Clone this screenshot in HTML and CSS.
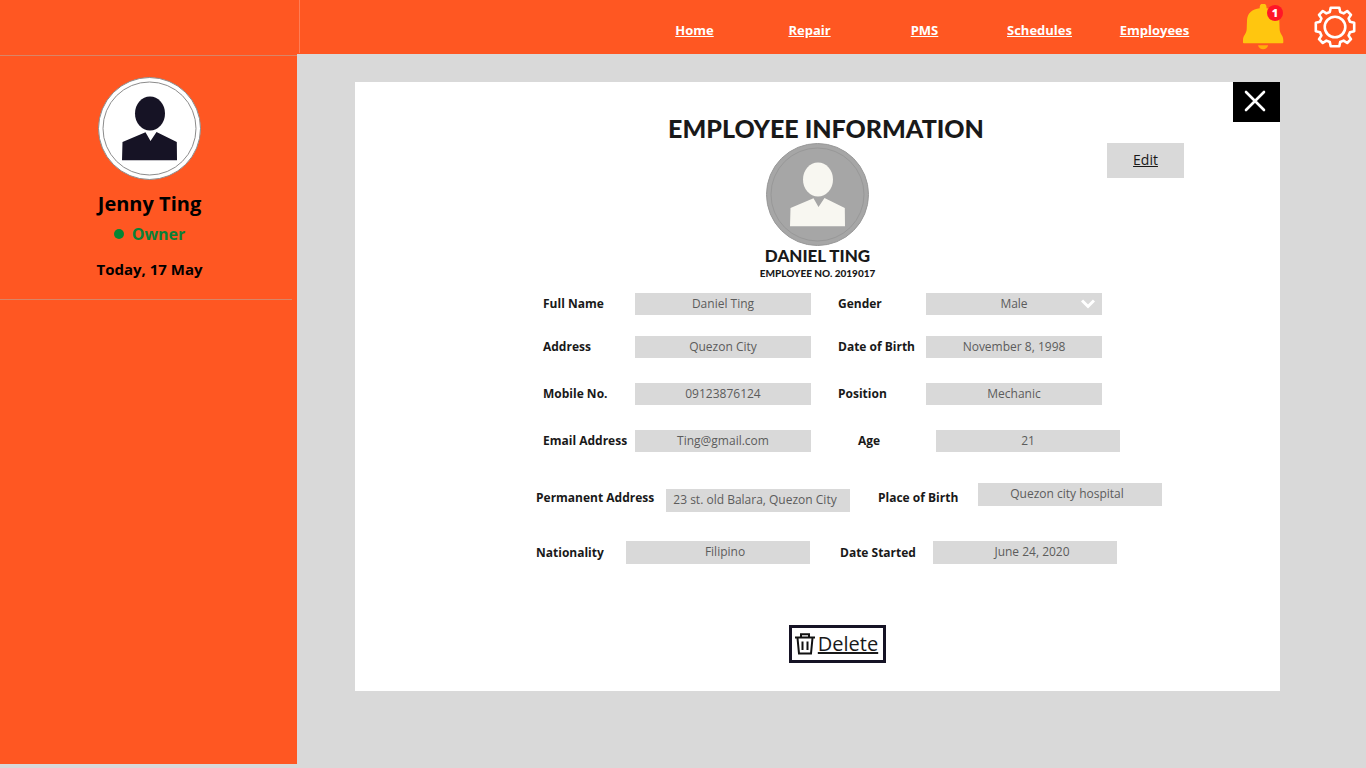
FILE: index.html
```html
<!DOCTYPE html>
<html lang="en">
<head>
<meta charset="utf-8">
<meta name="viewport" content="width=device-width, initial-scale=1">
<title>Employee Information</title>
<link rel="stylesheet" href="styles.css">
</head>
<body>
<svg class="sprite" aria-hidden="true">
  <symbol id="person" viewBox="0 0 103 103">
    <circle class="disc" cx="51.5" cy="51.5" r="51"/>
    <circle class="ring" cx="51.5" cy="51.5" r="46.5"/>
    <ellipse class="figure" cx="52" cy="36.500" rx="15" ry="17"/>
    <path class="figure" d="M24.500 65 47.500 55.200 52.500 64 58.500 55 78.800 65 79 83.200H24Z"/>
  </symbol>
</svg>

<header class="topbar">
  <div class="brand"></div>
  <nav class="nav" aria-label="Main">
    <a href="#">Home</a>
    <a href="#">Repair</a>
    <a href="#">PMS</a>
    <a href="#">Schedules</a>
    <a href="#">Employees</a>
  </nav>
  <button class="icon-button" type="button" aria-label="Notifications">
    <svg width="41" height="46" viewBox="0 0 41 46" fill="#ffc60f">
      <path d="M16.700 4.200V3a3.400 3.400 0 0 1 6.800 0v1.200C31 5 36 9 36.300 16.500L36.600 25C36.800 30 40.300 31.500 40.300 36V38.500Q40.300 39.300 39.500 39.300H.8Q0 39.300 0 38.500V36C0 31.500 3.500 30 3.700 25L4 16.500C4.300 9 9.200 5 16.700 4.200Z"/>
      <path fill="#ffad0a" d="M15 41.200H25.200C24.400 43.800 22.600 45.200 20.100 45.200S15.800 43.800 15 41.200Z"/>
    </svg>
    <span class="badge">1</span>
  </button>
  <button class="icon-button" type="button" aria-label="Settings">
    <svg width="42" height="42" viewBox="-21 -21 42 42" fill="none" stroke="#fff" stroke-width="2.600" stroke-linejoin="round">
      <path d="M-4.300-19.200H4.300L5.200-15 8.600-13.600 12.200-16 16-12.200 13.600-8.600 15-5.200 19.200-4.300V4.300L15 5.200 13.600 8.600 16 12.200 12.200 16 8.600 13.600 5.200 15 4.300 19.200H-4.300L-5.200 15-8.600 13.600-12.200 16-16 12.200-13.600 8.600-15 5.200-19.200 4.300V-4.300L-15-5.200-13.600-8.600-16-12.200-12.200-16-8.600-13.600-5.200-15Z"/>
      <circle r="10.300"/>
    </svg>
  </button>
</header>

<div class="layout">
  <aside class="sidebar">
    <div class="profile">
      <svg class="avatar avatar-owner" role="img" aria-label="Jenny Ting"><use href="#person"/></svg>
      <p class="profile-name">Jenny Ting</p>
      <p class="profile-role"><span class="dot"></span>Owner</p>
      <p class="profile-date">Today, 17 May</p>
    </div>
  </aside>

  <main class="content">
    <section class="card">
      <button class="close" type="button" aria-label="Close">
        <svg width="22" height="22" viewBox="0 0 22 22" stroke="#fff" stroke-width="2.600" stroke-linecap="round"><path d="M2 2 20 20M20 2 2 20"/></svg>
      </button>
      <h1 class="title">EMPLOYEE INFORMATION</h1>
      <div class="identity">
        <svg class="avatar avatar-employee" role="img" aria-label="Daniel Ting"><use href="#person"/></svg>
        <button class="edit" type="button">Edit</button>
      </div>
      <h2 class="employee-name">DANIEL TING</h2>
      <p class="employee-no">EMPLOYEE NO. 2019017</p>

      <form class="form">
        <div class="row">
          <label for="name">Full Name</label>
          <input id="name" type="text" value="Daniel Ting">
          <label for="gender">Gender</label>
          <div class="select">
            <select id="gender"><option>Male</option><option>Female</option></select>
            <svg class="chevron" width="14" height="10" viewBox="0 0 14 10" fill="none" stroke="#fff" stroke-width="3"><path d="M1 1.500 7 7.500 13 1.500"/></svg>
          </div>
        </div>
        <div class="row">
          <label for="address">Address</label>
          <input id="address" type="text" value="Quezon City">
          <label for="dob">Date of Birth</label>
          <input id="dob" type="text" value="November 8, 1998">
        </div>
        <div class="row">
          <label for="mobile">Mobile No.</label>
          <input id="mobile" type="text" value="09123876124">
          <label for="position">Position</label>
          <input id="position" type="text" value="Mechanic">
        </div>
        <div class="row row-age">
          <label for="email">Email Address</label>
          <input id="email" type="text" value="Ting@gmail.com">
          <label for="age">Age</label>
          <input id="age" type="text" value="21">
        </div>
        <div class="row row-places">
          <label for="permanent">Permanent Address</label>
          <input id="permanent" class="low" type="text" value="23 st. old Balara, Quezon City">
          <label for="birthplace">Place of Birth</label>
          <input id="birthplace" class="high" type="text" value="Quezon city hospital">
        </div>
        <div class="row row-status">
          <label for="nationality">Nationality</label>
          <input id="nationality" type="text" value="Filipino">
          <label for="started">Date Started</label>
          <input id="started" type="text" value="June 24, 2020">
        </div>
      </form>

      <button class="delete" type="button">
        <svg width="20" height="22" viewBox="0 0 20 22" fill="none" stroke="#111" stroke-width="2">
          <path d="M0 4.500H20M6 4.500V1.200H14V4.500M2.500 5 4 20.500H16L17.500 5M7.500 8.500V17M12.500 8.500V17"/>
        </svg>
        <span>Delete</span>
      </button>
    </section>
  </main>
</div>
</body>
</html>
```

FILE: styles.css
```css
* {
  box-sizing: border-box;
}

body {
  margin: 0;
  min-height: 100vh;
  display: flex;
  flex-direction: column;
  background: #d9d9d9;
  color: #191919;
  font-family: "Open Sans", "Noto Sans", sans-serif;
}

p,
h1,
h2 {
  margin: 0;
}

button {
  padding: 0;
  border: 0;
  font: inherit;
  color: inherit;
  cursor: pointer;
}

.sprite {
  display: none;
}

.topbar {
  display: flex;
  align-items: center;
  height: 54px;
  padding: 0 10px 1px 0;
  background: #ff5722;
}

.brand {
  align-self: stretch;
  width: 300px;
  margin-right: auto;
  border-right: 1px solid #ff7d55;
}

.nav {
  display: grid;
  grid-template-columns: repeat(5, 115px);
  margin-right: 31px;
  padding-top: 6px;
  font-size: 13px;
  font-weight: 700;
  text-align: center;
}

.nav a {
  color: #fff;
}

.icon-button {
  position: relative;
  background: none;
}

.icon-button svg {
  display: block;
}

.icon-button + .icon-button {
  margin-left: 30px;
}

.badge {
  position: absolute;
  top: 1px;
  right: 1px;
  width: 16px;
  height: 16px;
  border-radius: 50%;
  background: #ff1628;
  color: #fff;
  font-size: 11px;
  font-weight: 800;
  line-height: 16px;
}

.layout {
  flex: 1;
  display: flex;
}

.sidebar {
  flex-shrink: 0;
  width: 297px;
  margin-bottom: 4px;
  padding-top: 1px;
  background: #ff5722;
}

.sidebar::before {
  content: "";
  display: block;
  height: 1px;
  background: #d98567;
}

.profile {
  display: flex;
  flex-direction: column;
  align-items: center;
  margin-right: 5px;
  padding: 21px 0 19px 7px;
  border-bottom: 1px solid #d98567;
  color: #000;
  font-weight: 700;
}

.avatar {
  display: block;
  width: 103px;
  height: 103px;
}

.disc,
.ring {
  stroke: var(--line);
  stroke-width: 1;
}

.ring {
  fill: none;
}

.disc {
  fill: var(--disc);
}

.figure {
  fill: var(--figure);
}

.avatar-owner {
  --disc: #fff;
  --line: #8c8c8c;
  --figure: #161325;
}

.avatar-employee {
  --disc: #a6a6a6;
  --line: #989898;
  --figure: #f8f7f1;
  grid-column: 2;
}

.profile-name {
  padding-top: 10px;
  font-size: 20px;
  line-height: 28px;
}

.profile-role {
  display: flex;
  align-items: center;
  gap: 8px;
  padding-top: 4px;
  color: #0a8037;
  font-size: 16px;
  line-height: 24px;
}

.dot {
  width: 10px;
  height: 10px;
  border-radius: 50%;
  background: #058534;
}

.profile-date {
  padding-top: 12px;
  font-size: 15px;
  line-height: 22px;
}

.content {
  flex: 1;
  padding: 28px 86px 28px 58px;
}

.card {
  position: relative;
  display: flex;
  flex-direction: column;
  align-items: center;
  padding: 31px 0 28px;
  background: #fff;
}

.close {
  position: absolute;
  top: 0;
  right: 0;
  display: grid;
  place-items: center;
  width: 47px;
  height: 40px;
  padding: 0 3px 2px 0;
  background: #000;
}

.title,
.employee-name,
.employee-no {
  font-family: Lato, "Open Sans", sans-serif;
  font-weight: 900;
}

.title {
  padding-left: 17px;
  font-size: 25px;
  line-height: 30px;
}

.identity {
  display: grid;
  grid-template-columns: 1fr 103px 1fr;
  width: 100%;
}

.edit {
  justify-self: end;
  width: 77px;
  height: 35px;
  margin-right: 96px;
  padding-bottom: 3px;
  background: #d9d9d9;
  font-size: 14px;
  text-decoration: underline;
}

.employee-name {
  font-size: 17px;
  line-height: 20px;
}

.employee-no {
  font-size: 10px;
  line-height: 14px;
}

.form {
  display: flex;
  flex-direction: column;
  width: 626px;
  margin: 13px 0 61px 63px;
  font-size: 12px;
}

.row {
  display: grid;
  grid-template-columns: 92px 176px 27px 88px 176px;
  align-items: center;
  margin-bottom: 25px;
  padding-left: 7px;
}

.row:first-child {
  margin-bottom: 21px;
}

.row > :nth-child(3) {
  grid-column: 4;
}

.row label {
  font-weight: 700;
  line-height: 20px;
  white-space: nowrap;
}

.row input,
.row select {
  width: 100%;
  height: 22px;
  padding: 0 0 2px;
  border: 0;
  border-radius: 0;
  background: #d9d9d9;
  color: #5c5c5c;
  font: inherit;
  text-align: center;
}

.row select {
  display: block;
  appearance: none;
  text-align-last: center;
}

.select {
  position: relative;
}

.chevron {
  position: absolute;
  top: 6px;
  right: 7px;
  pointer-events: none;
}

.row-age {
  grid-template-columns: 92px 176px 47px 78px 184px;
  margin-bottom: 31px;
}

.row-places {
  grid-template-columns: 130px 184px 28px 100px 184px;
  height: 29px;
  margin-bottom: 29px;
  padding-left: 0;
}

.row-status {
  grid-template-columns: 90px 184px 30px 93px 184px;
  margin-bottom: 0;
  padding-left: 0;
}

.row-places input,
.row-status input {
  height: 23px;
}

.row-places input {
  padding-right: 6px;
}

.row-status input {
  padding-left: 14px;
}

.low {
  align-self: end;
}

.high {
  align-self: start;
}

.delete {
  display: flex;
  align-items: center;
  gap: 3px;
  height: 38px;
  margin-left: 40px;
  padding: 0 5px 0 3px;
  border: 3px solid #161325;
  background: #fff;
  font-size: 20px;
  text-decoration: underline;
}

.delete span {
  padding-bottom: 2px;
}
```
